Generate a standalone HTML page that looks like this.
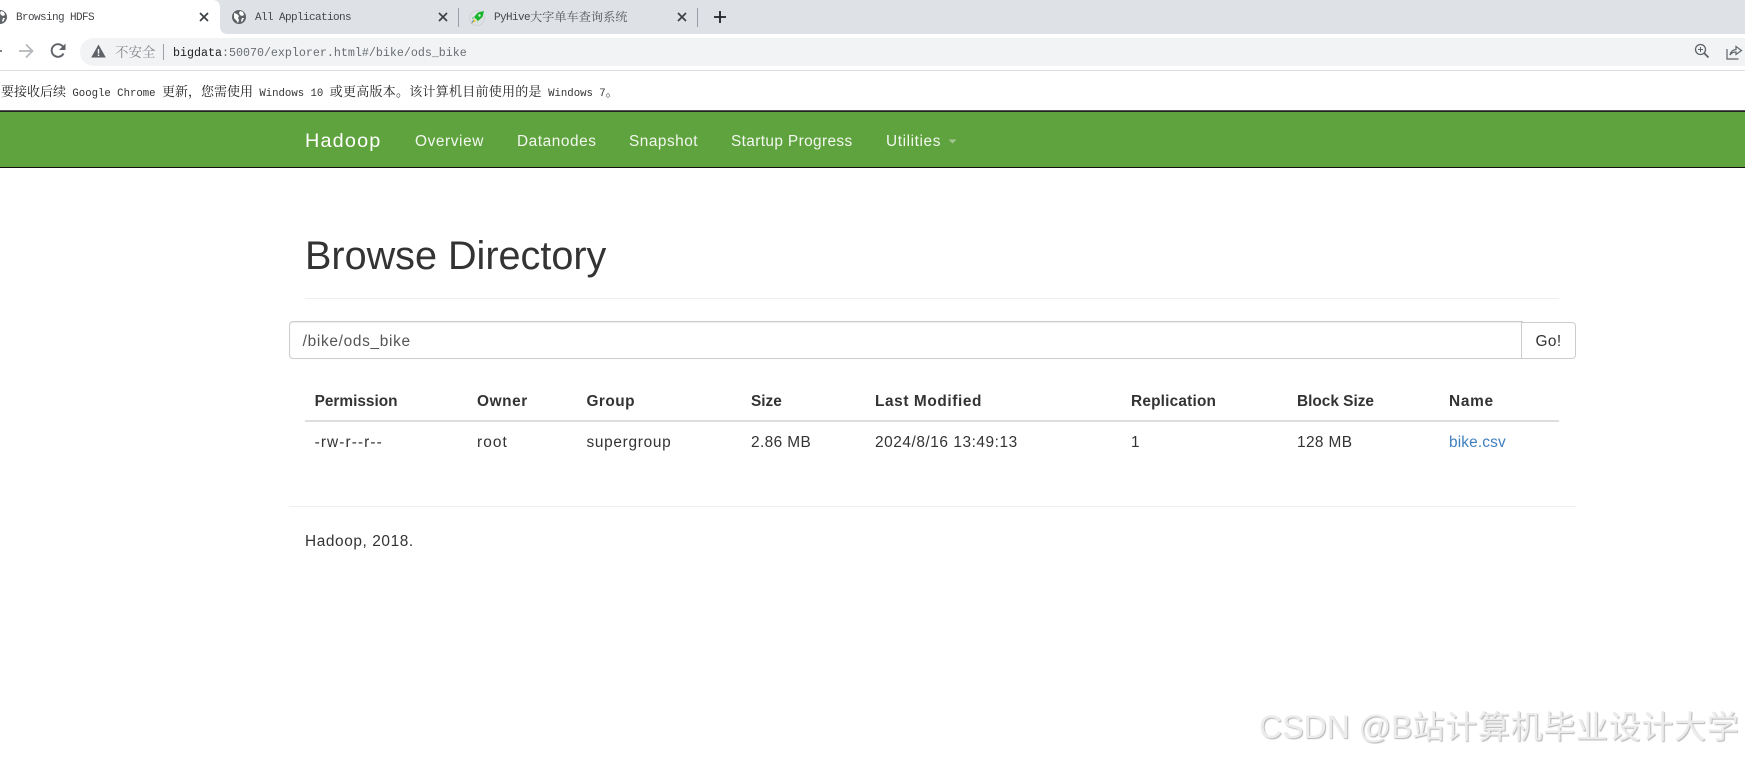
<!DOCTYPE html>
<html lang="zh"><head><meta charset="utf-8"><title>Browsing HDFS</title>
<style>
html,body{margin:0;padding:0;background:#fff;}
body{position:relative;width:1745px;height:757px;overflow:hidden;font-family:"Liberation Sans","Noto Sans CJK SC",sans-serif;}
.a{position:absolute;white-space:pre;}
.t{font-size:15.4px;line-height:20px;color:#333;}
.b{font-weight:bold;}
.n{font-size:15.4px;line-height:20px;color:#f2f7ef;top:132px;}
.m{font-family:"Liberation Mono","Noto Serif CJK SC",monospace;}
.tab{font-size:11px;line-height:14px;top:10px;color:#45474a;letter-spacing:-.6px;}
.cj{font-family:"Noto Serif CJK SC","Noto Sans CJK SC",serif;}
</style></head><body>
<div class="a" style="left:0;top:0;width:1745px;height:34px;background:#dee1e6"></div>
<div class="a" style="left:0;top:34px;width:1745px;height:36px;background:#fff"></div>
<svg class="a" style="left:0;top:0" width="240" height="34"><path d="M0 0H212Q220 0 220 8V26Q220 34 228 34H0Z" fill="#fff"/></svg>
<div class="a" style="left:80px;top:38px;width:1700px;height:28px;border-radius:14px;background:#f1f3f4"></div>
<div class="a" style="left:0;top:70px;width:1745px;height:1px;background:#dadce0"></div>
<div class="a" style="left:0;top:110px;width:1745px;height:1px;background:#555"></div>
<div class="a" style="left:0;top:111px;width:1745px;height:1px;background:#222"></div>

<!-- tab icons -->
<svg class="a" style="left:-7px;top:10px" width="14" height="14" viewBox="0 0 14 14"><circle cx="7" cy="7" r="7" fill="#5f6368"/><path d="M2 3l3 1 2 2-1 2 1 2-1 3-2-3-2-2zM8 1l3 1 1 3-2 1-2-1-1-2zM10 8l2 0-2 4-1-1z" fill="#fff"/></svg>
<svg class="a" style="left:232px;top:10px" width="14" height="14" viewBox="0 0 14 14"><circle cx="7" cy="7" r="7" fill="#5f6368"/><path d="M2 3l3 1 2 2-1 2 1 2-1 3-2-3-2-2zM8 1l3 1 1 3-2 1-2-1-1-2zM10 8l2 0-2 4-1-1z" fill="#fff"/></svg>
<svg class="a" style="left:469px;top:9px" width="17" height="17" viewBox="0 0 17 17"><circle cx="8" cy="9" r="7.5" fill="none" stroke="#cfd2d6"/><path d="M15 2L9 3.5 5 8l4 4 4.5-4z" fill="#18b52b"/><path d="M5 8l-2 1 1 1zM9 12l-1 2 1-1z" fill="#18b52b"/><circle cx="10.5" cy="6.5" r="1.2" fill="#d8f5d8"/><path d="M5 10l2 2-5 3z" fill="#f2c81e"/><path d="M4 11l1 1-3 3z" fill="#3b8de0"/></svg>

<div class="a m tab" style="left:16px;top:11px">Browsing HDFS</div>
<div class="a m tab" style="left:255px;top:11px">All Applications</div>
<div class="a m tab" style="left:494px;top:11px">PyHive</div>
<div class="a cj" style="left:530px;top:8px;font-size:12.2px;line-height:18px;color:#55575a">大字单车查询系统</div>

<svg class="a" style="left:199px;top:12px" width="10" height="10"><path d="M1 1L9 9M9 1L1 9" stroke="#3c4043" stroke-width="1.7"/></svg>
<svg class="a" style="left:438px;top:12px" width="10" height="10"><path d="M1 1L9 9M9 1L1 9" stroke="#3c4043" stroke-width="1.7"/></svg>
<svg class="a" style="left:677px;top:12px" width="10" height="10"><path d="M1 1L9 9M9 1L1 9" stroke="#3c4043" stroke-width="1.7"/></svg>
<div class="a" style="left:458px;top:8px;width:1px;height:19px;background:#9aa0a6"></div>
<div class="a" style="left:697px;top:8px;width:1px;height:19px;background:#9aa0a6"></div>
<svg class="a" style="left:713px;top:10px" width="14" height="14"><path d="M7 1V13M1 7H13" stroke="#202124" stroke-width="1.8"/></svg>

<!-- toolbar -->
<svg class="a" style="left:0;top:43px" width="70" height="16" viewBox="0 0 70 16">
<path d="M-6 8H2" stroke="#5f6368" stroke-width="1.6" fill="none"/>
<path d="M19 8H32M26 1.500L32.500 8 26 14.500" stroke="#b4b7bb" stroke-width="1.700" fill="none"/>
<path d="M63.500 10.500A6.300 6.300 0 1 1 63.500 4.500" stroke="#5f6368" stroke-width="1.900" fill="none"/>
<path d="M65.500 0.500V7H59Z" fill="#5f6368"/>
</svg>
<svg class="a" style="left:91px;top:44px" width="15" height="14"><path d="M7.500 0.500L14.800 13.500H0.200Z" fill="#5f6368"/><rect x="6.800" y="5" width="1.400" height="4.500" fill="#fff"/><rect x="6.800" y="10.500" width="1.400" height="1.500" fill="#fff"/></svg>
<div class="a cj" style="left:115px;top:42px;font-size:13.500px;line-height:18px;color:#85888c">不安全</div>
<div class="a" style="left:163px;top:44px;width:1px;height:16px;background:#9aa0a6"></div>
<div class="a m" style="left:173px;top:46px;font-size:11.670px;line-height:15px;color:#6a6d71"><span style="color:#202124">bigdata</span>:50070/explorer.html#/bike/ods_bike</div>
<svg class="a" style="left:1694px;top:43px" width="16" height="16"><circle cx="6.500" cy="6.500" r="5" fill="none" stroke="#5f6368" stroke-width="1.300"/><path d="M10.300 10.300L14.500 14.500" stroke="#5f6368" stroke-width="1.800"/><path d="M6.500 4V9M4 6.500H9" stroke="#5f6368"/></svg>
<svg class="a" style="left:1726px;top:44px" width="17" height="16"><path d="M1 5V15H12.500" fill="none" stroke="#5f6368" stroke-width="1.200"/><path d="M4 11Q5 6 10 5.500V2.500L15.500 6.500 10 10.500V8Q6 8 4 11Z" fill="none" stroke="#5f6368" stroke-width="1.200"/></svg>

<!-- infobar -->
<div class="a" style="left:1px;top:82px;font-size:10.670px;line-height:18px;color:#333" ><span class="cj" style="font-size:13px;color:#222">要接收后续</span><span class="m"> Google Chrome </span><span class="cj" style="font-size:13px;color:#222">更新，您需使用</span><span class="m"> Windows 10 </span><span class="cj" style="font-size:13px;color:#222;letter-spacing:.25px">或更高版本。该计算机目前使用的是</span><span class="m"> Windows 7</span><span class="cj" style="font-size:13px;color:#222">。</span></div>

<!-- navbar -->
<div class="a" style="left:0;top:112px;width:1745px;height:55px;background:#5fa33e"></div>
<div class="a" style="left:0;top:167px;width:1745px;height:1px;background:#111"></div>
<div class="a" style="left:305px;top:130px;font-size:19.800px;line-height:22px;color:#fff;letter-spacing:1.2px">Hadoop</div>
<div class="a n" style="left:415px;letter-spacing:.6px">Overview</div>
<div class="a n" style="left:517px;letter-spacing:.57px">Datanodes</div>
<div class="a n" style="left:629px;letter-spacing:.5px">Snapshot</div>
<div class="a n" style="left:731px;letter-spacing:.38px">Startup Progress</div>
<div class="a n" style="left:886px;letter-spacing:.6px">Utilities</div>
<svg class="a" style="left:948px;top:139px" width="9" height="5"><path d="M0.500 0.500H8.500L4.500 4.500Z" fill="#a5c595"/></svg>

<!-- heading -->
<div class="a" style="left:305px;top:234px;font-size:39.600px;line-height:44px;color:#333">Browse Directory</div>
<div class="a" style="left:305px;top:298px;width:1254px;height:1px;background:#eee"></div>

<!-- input -->
<div class="a" style="left:289px;top:321px;width:1232px;height:36px;border:1px solid #ccc;border-radius:4px 0 0 4px;box-shadow:inset 0 1px 1px rgba(0,0,0,.075);background:#fff;box-sizing:content-box"></div>
<div class="a t" style="left:302.600px;top:332px;color:#555;letter-spacing:.7px">/bike/ods_bike</div>
<div class="a" style="left:1521px;top:322px;width:53px;height:35px;border:1px solid #ccc;border-left:1px solid #ccc;border-radius:0 4px 4px 0;background:#fff"></div>
<div class="a t" style="left:1535.500px;top:332px;letter-spacing:.4px">Go!</div>

<!-- table -->
<div class="a t b" style="left:314.600px;top:392px">Permission</div>
<div class="a t b" style="left:477px;top:392px;letter-spacing:.6px">Owner</div>
<div class="a t b" style="left:586.500px;top:392px;letter-spacing:.45px">Group</div>
<div class="a t b" style="left:751px;top:392px">Size</div>
<div class="a t b" style="left:875px;top:392px;letter-spacing:.6px">Last Modified</div>
<div class="a t b" style="left:1131px;top:392px;letter-spacing:.2px">Replication</div>
<div class="a t b" style="left:1297px;top:392px">Block Size</div>
<div class="a t b" style="left:1449px;top:392px;letter-spacing:.7px">Name</div>
<div class="a" style="left:305px;top:420px;width:1254px;height:2px;background:#ddd"></div>
<div class="a t" style="left:314.600px;top:433px;letter-spacing:1.1px">-rw-r--r--</div>
<div class="a t" style="left:477px;top:433px;letter-spacing:1.1px">root</div>
<div class="a t" style="left:586.500px;top:433px;letter-spacing:.7px">supergroup</div>
<div class="a t" style="left:751px;top:433px;letter-spacing:.4px">2.86 MB</div>
<div class="a t" style="left:875px;top:433px;letter-spacing:.56px">2024/8/16 13:49:13</div>
<div class="a t" style="left:1131px;top:433px">1</div>
<div class="a t" style="left:1297px;top:433px;letter-spacing:.4px">128 MB</div>
<div class="a t" style="left:1449px;top:433px;color:#3f7fbf;letter-spacing:.15px">bike.csv</div>

<!-- footer -->
<div class="a" style="left:289px;top:506px;width:1287px;height:1px;background:#eee"></div>
<div class="a t" style="left:305px;top:532px;letter-spacing:.6px">Hadoop, 2018.</div>

<!-- watermark -->
<div class="a" style="left:1259px;top:707px;font-size:32px;line-height:40px;color:#ececec;text-shadow:1px 1px 1px #b5b5b5">CSDN @B<span style="letter-spacing:.7px">站计算机毕业设计大学</span></div>
</body></html>
